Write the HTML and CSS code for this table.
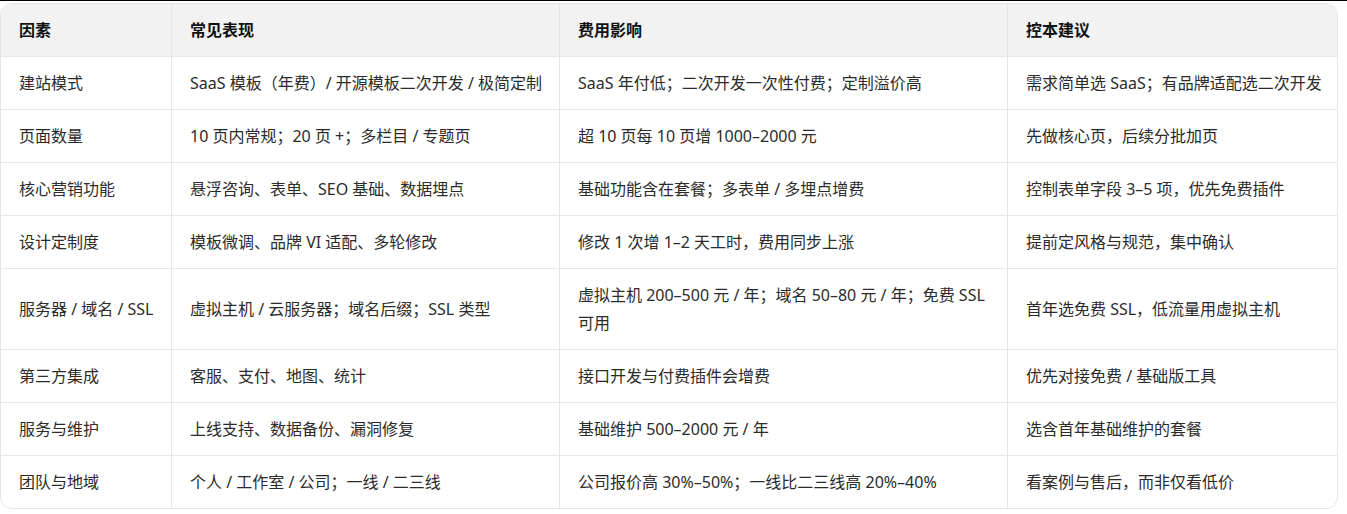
FILE: index.html
```html
<!DOCTYPE html>
<html lang="zh-CN">
<head>
<meta charset="utf-8">
<title>建站费用因素</title>
<link rel="stylesheet" href="styles.css">
</head>
<body>
<div class="topline"></div>
<div class="card">
  <table class="grid">
    <colgroup>
      <col class="c1"><col class="c2"><col class="c3"><col class="c4">
    </colgroup>
    <thead>
      <tr><th>因素</th><th>常见表现</th><th>费用影响</th><th>控本建议</th></tr>
    </thead>
    <tbody>
      <tr><td>建站模式</td><td>SaaS 模板（年费）/ 开源模板二次开发 / 极简定制</td><td>SaaS 年付低；二次开发一次性付费；定制溢价高</td><td>需求简单选 SaaS；有品牌适配选二次开发</td></tr>
      <tr><td>页面数量</td><td>10 页内常规；20 页 +；多栏目 / 专题页</td><td>超 10 页每 10 页增 1000–2000 元</td><td>先做核心页，后续分批加页</td></tr>
      <tr><td>核心营销功能</td><td>悬浮咨询、表单、SEO 基础、数据埋点</td><td>基础功能含在套餐；多表单 / 多埋点增费</td><td>控制表单字段 3–5 项，优先免费插件</td></tr>
      <tr><td>设计定制度</td><td>模板微调、品牌 VI 适配、多轮修改</td><td>修改 1 次增 1–2 天工时，费用同步上涨</td><td>提前定风格与规范，集中确认</td></tr>
      <tr><td>服务器 / 域名 / SSL</td><td>虚拟主机 / 云服务器；域名后缀；SSL 类型</td><td>虚拟主机 200–500 元 / 年；域名 50–80 元 / 年；免费 SSL 可用</td><td>首年选免费 SSL，低流量用虚拟主机</td></tr>
      <tr><td>第三方集成</td><td>客服、支付、地图、统计</td><td>接口开发与付费插件会增费</td><td>优先对接免费 / 基础版工具</td></tr>
      <tr><td>服务与维护</td><td>上线支持、数据备份、漏洞修复</td><td>基础维护 500–2000 元 / 年</td><td>选含首年基础维护的套餐</td></tr>
      <tr><td>团队与地域</td><td>个人 / 工作室 / 公司；一线 / 二三线</td><td>公司报价高 30%–50%；一线比二三线高 20%–40%</td><td>看案例与售后，而非仅看低价</td></tr>
    </tbody>
  </table>
</div>
</body>
</html>
```
FILE: styles.css
```css
html, body {
  margin: 0;
  padding: 0;
  background: #ffffff;
}
body {
  font-family: "Noto Sans", "Noto Sans CJK SC", sans-serif;
  font-size: 16px;
  color: #2b2b2b;
}
.topline {
  height: 1px;
  background: #000000;
}
.card {
  margin-top: 2px;
  width: 1338px;
  box-sizing: border-box;
  border: 1px solid #e6e6e6;
  border-radius: 12px;
  overflow: hidden;
}
.grid {
  width: 100%;
  table-layout: fixed;
  border-collapse: separate;
  border-spacing: 0;
}
.c1 { width: 171px; }
.c2 { width: 388px; }
.c3 { width: 448px; }
.c4 { width: auto; }
.grid th,
.grid td {
  padding: 12px 6px 12px 18px;
  line-height: 28px;
  text-align: left;
  vertical-align: middle;
  border-right: 1px solid #e6e6e6;
  border-bottom: 1px solid #e6e6e6;
}
.grid th:last-child,
.grid td:last-child {
  border-right: none;
}
.grid tbody tr:last-child td {
  border-bottom: none;
}
.grid th {
  background: #f2f2f2;
  font-weight: 700;
  color: #111111;
}
.grid td {
  font-weight: 400;
}
```
